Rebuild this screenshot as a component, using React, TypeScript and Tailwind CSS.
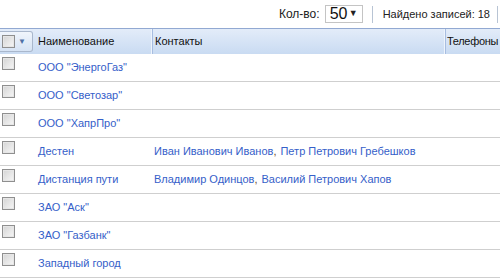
import React from 'react';

type Row = { name: string; contacts: string[] };

const rows: Row[] = [
  { name: 'ООО "ЭнергоГаз"', contacts: [] },
  { name: 'ООО "Светозар"', contacts: [] },
  { name: 'ООО "ХапрПро"', contacts: [] },
  { name: 'Дестен', contacts: ['Иван Иванович Иванов', 'Петр Петрович Гребешков'] },
  { name: 'Дистанция пути', contacts: ['Владимир Одинцов', 'Василий Петрович Хапов'] },
  { name: 'ЗАО "Аск"', contacts: [] },
  { name: 'ЗАО "Газбанк"', contacts: [] },
  { name: 'Западный город', contacts: [] },
];

const CheckBox = () => (
  <span className="block w-[13px] h-[13px] border border-[#8f8f8f] bg-gradient-to-br from-[#d4d4d4] to-[#f7f7f7] shadow-[inset_0_0_0_1px_#e6e6e6]" />
);

export default function App() {
  return (
    <div className="w-[500px] h-[279px] overflow-hidden bg-white text-[11px] text-[#222]" style={{ fontFamily: '"Liberation Sans", Arial, sans-serif' }}>
      {/* Toolbar */}
      <div className="h-[29px] flex items-center justify-end border-b border-[#92a9d2]">
        <span className="text-[12px] text-[#222] mr-[5px]">Кол-во:</span>
        <div className="w-[38px] h-[18px] border border-[#c4c4c4] flex items-center justify-between pl-[4px] pr-[4px]">
          <span className="text-[16px] leading-none text-[#111]">50</span>
          <span className="text-[9px] text-[#222]">▼</span>
        </div>
        <span className="w-px h-[17px] bg-[#b8c4d4] ml-[9px] mr-[10px]" />
        <span className="text-[11px] text-[#222]">Найдено записей: 18</span>
        <span className="w-px h-[17px] bg-[#b8c4d4] ml-[7px] mr-[2px]" />
      </div>

      {/* Header */}
      <div className="h-[25px] grid grid-cols-[34px_117px_293px_1fr] bg-gradient-to-b from-[#e3ecf9] to-[#c9dbf2] text-[11px] text-[#111]">
        <div className="flex items-center">
          <div className="w-[33px] h-[21px] border border-[#a9b7cc] border-l-0 rounded-r-[3px] bg-gradient-to-b from-[#f0f5fc] to-[#d6e3f4] flex items-center pl-[2px] gap-[3px]">
            <CheckBox />
            <span className="text-[8px] text-[#4f70a6] leading-none">▼</span>
          </div>
        </div>
        <div className="flex items-center pl-[4px]">Наименование</div>
        <div className="flex items-center pl-[3px] border-l border-[#eef4fc] shadow-[inset_1px_0_0_#a7bde0]">Контакты</div>
        <div className="flex items-center pl-[2px] border-l border-[#eef4fc] shadow-[inset_1px_0_0_#a7bde0] whitespace-nowrap tracking-[-0.3px]">Телефоны</div>
      </div>

      {/* Rows */}
      {rows.map((r, i) => (
        <div key={i} className="h-[28px] grid grid-cols-[34px_117px_293px_1fr] border-b border-[#cfcfcf] text-[11px] text-[#3560c9]">
          <div className="pl-[2px] pt-[3px]">
            <CheckBox />
          </div>
          <div className="flex items-center pl-[4px] whitespace-nowrap">{r.name}</div>
          <div className="flex items-center pl-[3px] whitespace-nowrap">
            {r.contacts.map((c, j) => (
              <React.Fragment key={j}>
                {j > 0 && <span className="text-[#6b4a1f] mr-[4px]">,</span>}
                <span>{c}</span>
              </React.Fragment>
            ))}
          </div>
          <div />
        </div>
      ))}
    </div>
  );
}
